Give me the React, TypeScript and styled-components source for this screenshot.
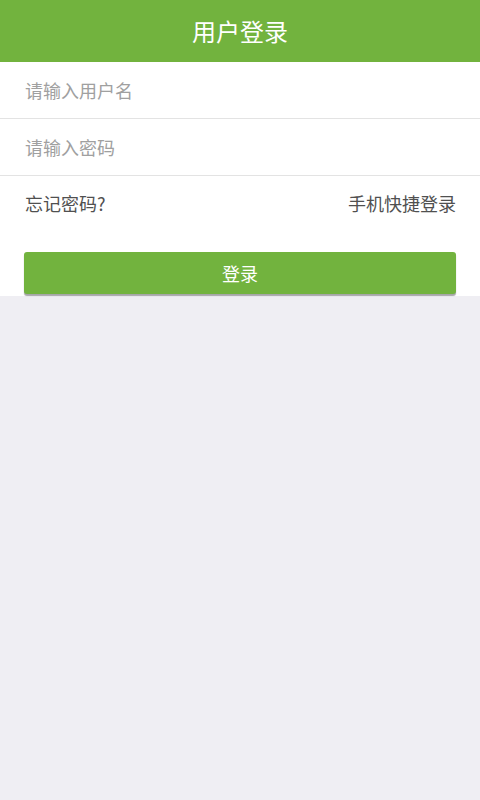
import React from "react";
import styled, { createGlobalStyle } from "styled-components";

const GlobalStyle = createGlobalStyle`
  html, body {
    margin: 0;
    padding: 0;
    background: #efeef3;
    font-family: "Noto Sans CJK SC", "Noto Sans", sans-serif;
  }
  * { box-sizing: border-box; }
`;

const Page = styled.div`
  width: 480px;
  min-height: 800px;
  background: #efeef3;
  display: flex;
  flex-direction: column;
`;

const Header = styled.header`
  height: 62px;
  background: #72b33e;
  display: flex;
  align-items: center;
  justify-content: center;
  color: #ffffff;
  font-size: 24px;
  line-height: 1;
`;

const Form = styled.div`
  background: #ffffff;
  display: flex;
  flex-direction: column;
  padding-bottom: 2px;
`;

const Field = styled.input`
  height: 57px;
  border: none;
  border-bottom: 1px solid #e3e3e3;
  padding: 0 25px;
  font-family: inherit;
  font-size: 18px;
  color: #333;
  background: transparent;
  outline: none;
  &::placeholder {
    color: #a0a0a0;
  }
`;

const LinkRow = styled.div`
  height: 54px;
  display: flex;
  align-items: center;
  justify-content: space-between;
  padding: 0 24px 0 25px;
  font-size: 18px;
  color: #505050;
`;

const LinkText = styled.span`
  line-height: 1;
`;

const ButtonWrap = styled.div`
  padding: 22px 24px 0 24px;
`;

const LoginButton = styled.button`
  width: 100%;
  height: 42px;
  border: none;
  border-radius: 3px;
  background: #72b33e;
  color: #ffffff;
  font-family: inherit;
  font-size: 18px;
  box-shadow: 0 2px 1px #a6a6a8;
  cursor: pointer;
`;

export default function App() {
  return (
    <>
      <GlobalStyle />
      <Page>
        <Header>用户登录</Header>
        <Form>
          <Field placeholder="请输入用户名" />
          <Field type="password" placeholder="请输入密码" />
          <LinkRow>
            <LinkText>忘记密码?</LinkText>
            <LinkText>手机快捷登录</LinkText>
          </LinkRow>
          <ButtonWrap>
            <LoginButton>登录</LoginButton>
          </ButtonWrap>
        </Form>
      </Page>
    </>
  );
}
